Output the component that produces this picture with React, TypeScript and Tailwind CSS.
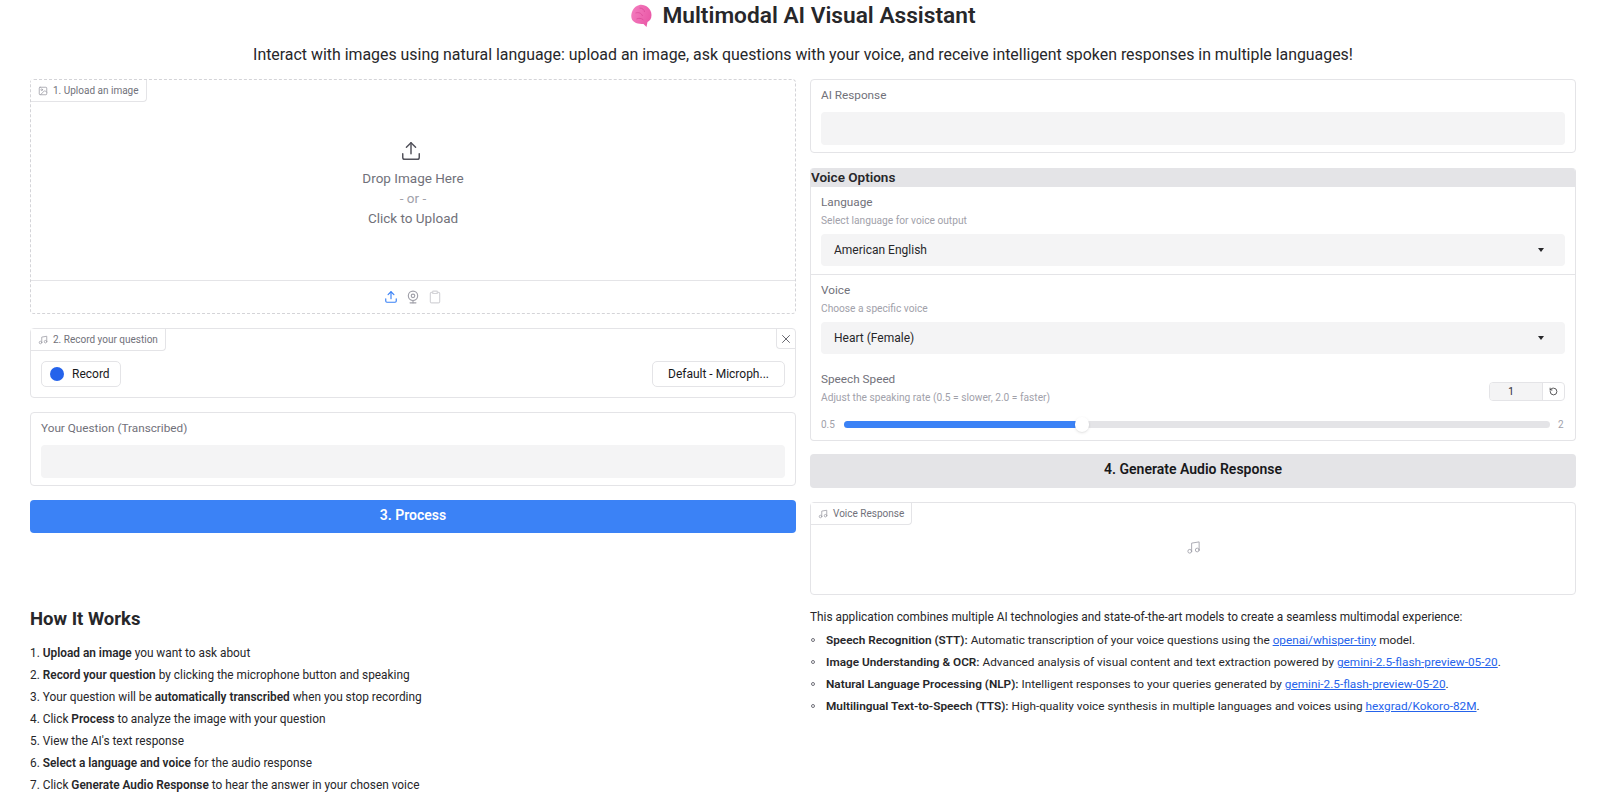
import { Clipboard, Image, Music, RotateCcw, Upload, Webcam, X } from "lucide-react";
import type { ReactNode } from "react";

function BlockLabel({ icon, text }: { icon: ReactNode; text: string }) {
  return (
    <div className="flex h-[22px] w-fit items-center gap-[5px] rounded-br-[4px] border-r border-b border-[#e4e4e7] bg-white pr-[7px] pl-[7px] text-[10px] text-[#71717a]">
      {icon}
      <span>{text}</span>
    </div>
  );
}

function TextBox({ label }: { label: string }) {
  return (
    <div className="rounded-[4px] border border-[#e4e4e7] bg-white px-[10px] pt-[7px] pb-[7px]">
      <div className="h-[17px] text-[11.75px] leading-[17px] text-[#71717a]">{label}</div>
      <div className="mt-[8px] h-[33px] rounded-[4px] bg-[#f4f4f5]" />
    </div>
  );
}

function Dropdown({ label, info, value }: { label: string; info: string; value: string }) {
  return (
    <div>
      <div className="h-[17px] text-[11.75px] leading-[17px] text-[#71717a]">{label}</div>
      <div className="mt-[2px] h-[16px] text-[10.2px] leading-[16px] text-[#a1a1aa]">{info}</div>
      <div className="mt-[5px] flex h-[32px] items-center justify-between rounded-[4px] bg-[#f4f4f5] pr-[21px] pl-[13px] text-[12px] text-[#27272a]">
        <span>{value}</span>
        <span className="h-0 w-0 border-x-[3.5px] border-t-[4px] border-x-transparent border-t-[#27272a]" />
      </div>
    </div>
  );
}

const steps: ReactNode[] = [
  <><b className="font-semibold">Upload an image</b> you want to ask about</>,
  <><b className="font-semibold">Record your question</b> by clicking the microphone button and speaking</>,
  <>Your question will be <b className="font-semibold">automatically transcribed</b> when you stop recording</>,
  <>Click <b className="font-semibold">Process</b> to analyze the image with your question</>,
  <>View the AI's text response</>,
  <><b className="font-semibold">Select a language and voice</b> for the audio response</>,
  <>Click <b className="font-semibold">Generate Audio Response</b> to hear the answer in your chosen voice</>,
];

function ModelLink({ children }: { children: ReactNode }) {
  return <a href="#" className="text-[#2563eb] underline">{children}</a>;
}

const features: ReactNode[] = [
  <><b className="font-semibold">Speech Recognition (STT):</b> Automatic transcription of your voice questions using the <ModelLink>openai/whisper-tiny</ModelLink> model.</>,
  <><b className="font-semibold">Image Understanding &amp; OCR:</b> Advanced analysis of visual content and text extraction powered by <ModelLink>gemini-2.5-flash-preview-05-20</ModelLink>.</>,
  <><b className="font-semibold">Natural Language Processing (NLP):</b> Intelligent responses to your queries generated by <ModelLink>gemini-2.5-flash-preview-05-20</ModelLink>.</>,
  <><b className="font-semibold">Multilingual Text-to-Speech (TTS):</b> High-quality voice synthesis in multiple languages and voices using <ModelLink>hexgrad/Kokoro-82M</ModelLink>.</>,
];

export default function App() {
  return (
    <div className="h-[801px] w-[1613px] overflow-hidden bg-white pr-[37px] pl-[30px] font-['Roboto',sans-serif] text-[#27272a]">
      <h1 className="flex h-[30px] items-center justify-center gap-[9px] pt-[2px] text-[22.7px] font-semibold">
        <svg width="23" height="24" viewBox="0 0 22 24">
          <defs>
            <linearGradient id="brain" x1="0" y1="0" x2="1" y2="0.4">
              <stop offset="0" stopColor="#f47fc0" />
              <stop offset="1" stopColor="#ea5aa8" />
            </linearGradient>
          </defs>
          <path d="M9 1c5-1 12 3 12 10 0 4-2 6-4 7l-1 5-3-3c-5 0-11-1-12-6C0 9 3 2 9 1z" fill="url(#brain)" />
          <path d="M9 4c3 0 5 2 5 4M5 9c3-1 6 0 7 3M6 15c2-1 5-1 7 1" fill="none" stroke="#db4a98" strokeWidth="0.8" />
        </svg>
        Multimodal AI Visual Assistant
      </h1>
      <p className="mt-[13px] h-[24px] text-center text-[15.9px] leading-[24px]">
        Interact with images using natural language: upload an image, ask questions with your voice, and receive intelligent spoken responses in multiple languages!
      </p>

      <div className="mt-[12px] grid grid-cols-2 gap-[14px]">
        <div>
          <div className="flex h-[235px] flex-col rounded-[4px] border border-dashed border-[#d4d4d8]">
            <BlockLabel icon={<Image size={10} className="text-[#a1a1aa]" />} text="1. Upload an image" />
            <div className="flex flex-1 flex-col items-center pt-[38px] text-[13.5px] text-[#71717a]">
              <Upload size={22} strokeWidth={1.6} className="mr-[4px] text-[#52525b]" />
              <div className="mt-[6px] leading-[20px]">Drop Image Here</div>
              <div className="leading-[20px] text-[#a1a1aa]">- or -</div>
              <div className="leading-[20px]">Click to Upload</div>
            </div>
            <div className="flex h-[33px] items-center justify-center gap-[8px] border-t border-[#e4e4e7]">
              <Upload size={14} className="text-[#3b82f6]" />
              <Webcam size={14} className="text-[#a1a1aa]" />
              <Clipboard size={14} className="text-[#d4d4d8]" />
            </div>
          </div>

          <div className="mt-[14px] h-[70px] rounded-[4px] border border-[#e4e4e7]">
            <div className="flex items-start justify-between">
              <BlockLabel icon={<Music size={10} className="text-[#a1a1aa]" />} text="2. Record your question" />
              <div className="flex h-[20px] w-[19px] items-center justify-center rounded-bl-[4px] border-b border-l border-[#e4e4e7]">
                <X size={14} strokeWidth={1.5} className="text-[#52525b]" />
              </div>
            </div>
            <div className="mt-[10px] flex items-center justify-between px-[10px]">
              <div className="flex h-[26px] w-[80px] items-center gap-[8px] rounded-[5px] border border-[#e4e4e7] pl-[8px] text-[12px] text-[#18181b]">
                <span className="h-[14px] w-[14px] rounded-full bg-[#2563eb]" />
                Record
              </div>
              <div className="flex h-[26px] w-[133px] items-center justify-center rounded-[5px] border border-[#e4e4e7] text-[12px] text-[#18181b]">
                Default - Microph...
              </div>
            </div>
          </div>

          <div className="mt-[14px]">
            <TextBox label="Your Question (Transcribed)" />
          </div>

          <button className="mt-[14px] block h-[33px] w-full rounded-[4px] bg-[#3b82f6] pb-[2px] text-[14px] font-semibold text-white">
            3. Process
          </button>

          <h2 className="mt-[74px] h-[24px] text-[18.5px] leading-[24px] font-bold">How It Works</h2>
          <ol className="mt-[11px] text-[11.85px]">
            {steps.map((step, i) => (
              <li key={i} className="h-[22px] leading-[22px]">{i + 1}. {step}</li>
            ))}
          </ol>
        </div>

        <div>
          <TextBox label="AI Response" />

          <div className="mt-[15px] h-[273px] overflow-hidden rounded-[4px] border-x border-b border-[#e4e4e7]">
            <div className="h-[19px] bg-[#e4e4e7] text-[13.5px] leading-[19px] font-semibold">Voice Options</div>
            <div className="h-[88px] border-b border-[#e4e4e7] px-[10px] pt-[7px]">
              <Dropdown label="Language" info="Select language for voice output" value="American English" />
            </div>
            <div className="px-[10px] pt-[7px]">
              <Dropdown label="Voice" info="Choose a specific voice" value="Heart (Female)" />
              <div className="mt-[17px] flex items-start justify-between">
                <div>
                  <div className="h-[17px] text-[11.75px] leading-[17px] text-[#71717a]">Speech Speed</div>
                  <div className="mt-[2px] h-[16px] text-[10.2px] leading-[16px] text-[#a1a1aa]">Adjust the speaking rate (0.5 = slower, 2.0 = faster)</div>
                </div>
                <div className="mt-[11px] flex h-[19px] w-[76px] overflow-hidden rounded-[4px] border border-[#e4e4e7] text-[10px]">
                  <div className="flex flex-1 items-center justify-center bg-[#f4f4f5] pr-[10px]">1</div>
                  <div className="flex w-[22px] items-center justify-center border-l border-[#e4e4e7]">
                    <RotateCcw size={9} />
                  </div>
                </div>
              </div>
              <div className="mt-[11px] flex h-[15px] items-center gap-[8px] text-[10px] text-[#a1a1aa]">
                <span className="w-[15px]">0.5</span>
                <div className="relative h-[7px] flex-1 rounded-full bg-[#e4e4e7]">
                  <div className="h-full w-[33.4%] rounded-full bg-[#3b82f6]" />
                  <div className="absolute top-[-4px] left-[32.7%] h-[15px] w-[14px] rounded-full bg-white shadow" />
                </div>
                <span className="w-[7px]">2</span>
              </div>
            </div>
          </div>

          <button className="mt-[13px] block h-[34px] w-full rounded-[4px] bg-[#e4e4e7] pb-[3px] text-[14px] font-semibold text-[#18181b]">
            4. Generate Audio Response
          </button>

          <div className="mt-[14px] h-[93px] rounded-[4px] border border-[#e4e4e7]">
            <BlockLabel icon={<Music size={10} className="text-[#a1a1aa]" />} text="Voice Response" />
            <div className="flex justify-center pt-[15px]">
              <Music size={15} strokeWidth={1.4} className="text-[#a1a1aa]" />
            </div>
          </div>

          <p className="mt-[13px] h-[18px] text-[11.85px] leading-[18px]">
            This application combines multiple AI technologies and state-of-the-art models to create a seamless multimodal experience:
          </p>
          <ul className="mt-[3px] text-[11.8px]">
            {features.map((feature, i) => (
              <li key={i} className="flex h-[22px] items-center leading-[22px]">
                <span className="mr-[11px] ml-[1px] h-[4px] w-[4px] rounded-full border border-[#71717a]" />
                <span>{feature}</span>
              </li>
            ))}
          </ul>
        </div>
      </div>
    </div>
  );
}
